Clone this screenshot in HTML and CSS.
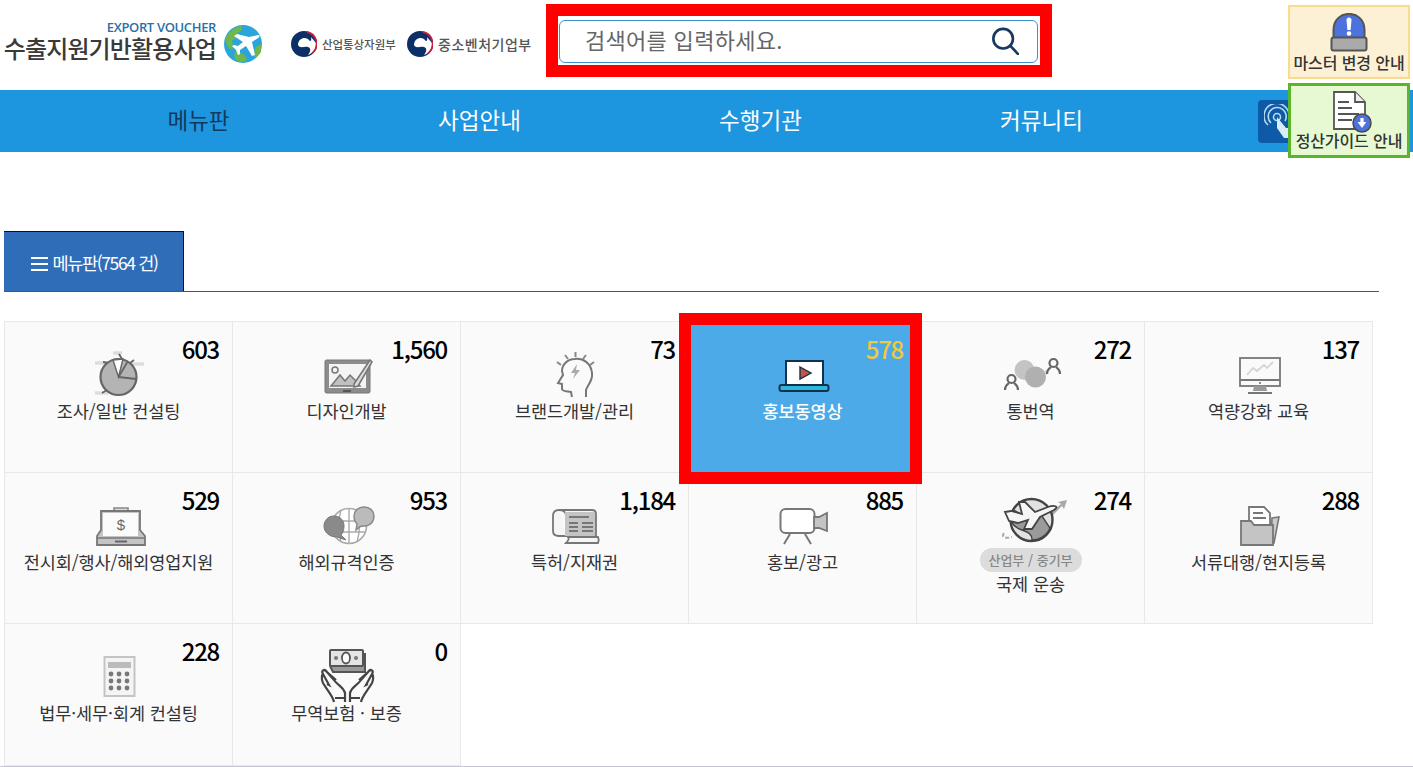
FILE: index.html
```html
<!DOCTYPE html>
<html lang="ko">
<head>
    <meta charset="UTF-8">
    <meta name="viewport" content="width=device-width, initial-scale=1.0">
    <title>수출지원기반활용사업</title>
    <link rel="stylesheet" href="styles.css">
</head>
<body>
    <header class="top">
        <div class="logo">
            <div class="logo-text">
                <span class="logo-en">EXPORT VOUCHER</span>
                <span class="logo-ko">수출지원기반활용사업</span>
            </div>
            <svg class="globe" width="38" height="38" viewBox="0 0 38 38">
                <circle cx="19" cy="19" r="19" fill="#2aa5dc"/>
                <path d="M2 13 C5 6 11 2 17 1 C20 4 16 7 13 8 C14 12 12 15 8 15 C8 19 10 22 8 25 C4 23 1 18 2 13 Z" fill="#6fb74a"/>
                <path d="M12 27 C17 27 22 30 23 35 C19 38 14 37 11 34 C10 31 10 29 12 27 Z" fill="#6fb74a"/>
                <path d="M32 22 L37 19 L37 27 C35 30 33 32 31 33 C30 29 30 25 32 22 Z" fill="#6fb74a"/>
                <path d="M34 10 C36 10 36 12 34 13 L28 17 L31 30 L28 31 L22 21 L16 25 L16 29 L14 30 L12 25 L8 21 L10 20 L14 21 L19 17 L10 11 L13 9 L25 12 Z" fill="#fff"/>
            </svg>
        </div>
        <div class="gov gov-first">
            <svg width="26" height="26" viewBox="0 0 26 26">
                <circle cx="13" cy="13" r="13" fill="#0c2f66"/>
                <path d="M7 14 C7 7 15 5 18 9 C19 11 21 10 20 6 L25 12 C25 18 22 22 17 24 C20 20 20 17 17 16 C13 15 9 18 7 14 Z" fill="#fff"/>
                <path d="M16 1 A12.200 12.200 0 0 1 21 22.500" fill="none" stroke="#c8203c" stroke-width="1.800"/>
            </svg>
            <span class="gov-name">산업통상자원부</span>
        </div>
        <div class="gov">
            <svg width="26" height="26" viewBox="0 0 26 26">
                <circle cx="13" cy="13" r="13" fill="#0c2f66"/>
                <path d="M7 14 C7 7 15 5 18 9 C19 11 21 10 20 6 L25 12 C25 18 22 22 17 24 C20 20 20 17 17 16 C13 15 9 18 7 14 Z" fill="#fff"/>
                <path d="M16 1 A12.200 12.200 0 0 1 21 22.500" fill="none" stroke="#c8203c" stroke-width="1.800"/>
            </svg>
            <span class="gov-name gov-name-big">중소벤처기업부</span>
        </div>
        <div class="search-mark">
            <div class="search">
                <span class="search-hint">검색어를 입력하세요.</span>
                <svg class="search-ico" width="28" height="28" viewBox="0 0 30 30">
                    <circle cx="13" cy="12.500" r="10.500" fill="none" stroke="#17395f" stroke-width="2.800"/>
                    <path d="M20.500 20 L29 29" stroke="#17395f" stroke-width="2.800" stroke-linecap="round"/>
                </svg>
            </div>
        </div>
    </header>

    <nav class="nav">
        <a class="nav-item active">메뉴판</a>
        <a class="nav-item">사업안내</a>
        <a class="nav-item">수행기관</a>
        <a class="nav-item">커뮤니티</a>
        <span class="touch">
            <svg width="30" height="34" viewBox="0 0 30 34" fill="none" stroke="#b9dcf5" stroke-width="1.600">
                <circle cx="13" cy="13" r="3.500"/>
                <path d="M7 19 A9 9 0 1 1 21 17"/>
                <path d="M4 21 A12.500 12.500 0 1 1 25 13"/>
                <path d="M13 13 L22 24 L30 24 L30 34 L20 34 L13 24" fill="#d8ecfa" stroke="none"/>
            </svg>
        </span>
    </nav>

    <div class="side">
        <a class="side-btn side-master">
            <svg width="38" height="39" viewBox="0 0 38 39">
                <path d="M3.500 26 L3.500 17 C3.500 -4.500 34.500 -4.500 34.500 17 L34.500 26 Z" fill="#4b72dd" stroke="#555" stroke-width="2"/>
                <rect x="1.500" y="24.500" width="35" height="13" rx="2" fill="#aaa" stroke="#555" stroke-width="2"/>
                <path d="M16.500 7 C16.500 3.500 21.500 3.500 21.500 7 L20.600 17 L17.400 17 Z" fill="#fff"/>
                <circle cx="19" cy="20.500" r="2.300" fill="#fff"/>
            </svg>
            <span>마스터 변경 안내</span>
        </a>
        <a class="side-btn side-guide">
            <svg width="40" height="42" viewBox="0 0 40 42">
                <path d="M2 1 L23 1 L33 11 L33 38 L2 38 Z" fill="#fff" stroke="#555" stroke-width="1.800"/>
                <path d="M23 1 L23 11 L33 11" fill="#eee" stroke="#555" stroke-width="1.800"/>
                <path d="M6 11 L17 11 M6 17 L20 17 M6 23 L27 23 M6 29 L20 29" stroke="#555" stroke-width="1.800"/>
                <circle cx="30" cy="32" r="9" fill="#4b72dd" stroke="#4a4a4a" stroke-width="1.500"/>
                <path d="M28.400 27 L31.600 27 L31.600 31 L34.400 31 L30 37 L25.600 31 L28.400 31 Z" fill="#fff"/>
            </svg>
            <span>정산가이드 안내</span>
        </a>
    </div>

    <main>
        <div class="tabs">
            <a class="tab"><span class="burger"></span>메뉴판(7564 건)</a>
        </div>

        <div class="board">
            <a class="cell">
                <b class="count">603</b>
                <svg class="ico" width="66" height="46" viewBox="0 0 66 46">
                    <path d="M9 12 L23 12 M43 13 L58 13 M9 42 L22 42 M27 2 L36 2" stroke="#ddd" stroke-width="3.500"/>
                    <circle cx="32.500" cy="26" r="18" fill="#b4b4b4" stroke="#666" stroke-width="2.200"/>
                    <path d="M32.500 26 L27 9 L37 8 Z" fill="#fff" stroke="#666" stroke-width="1.400"/>
                    <path d="M32.500 26 L42 10 M32.500 26 L50 28 M22 12 L17 11 M36 8 L33 3 M44 12 L48 9 M21 39 L16 42" fill="none" stroke="#666" stroke-width="1.800"/>
                </svg>
                <span class="name">조사/일반 컨설팅</span>
            </a>
            <a class="cell">
                <b class="count">1,560</b>
                <svg class="ico" width="66" height="46" viewBox="0 0 66 46">
                    <rect x="11" y="9" width="45" height="33" rx="1.500" fill="#8c8c8c" stroke="#777"/>
                    <rect x="15" y="13" width="37" height="24" fill="#f4f4f4"/>
                    <circle cx="21" cy="19" r="3" fill="#f4f4f4" stroke="#777" stroke-width="1.500"/>
                    <path d="M17 35 L26 24 L31 30 L36 24 L43 31 L46 35 Z" fill="#c0c0c0" stroke="#777" stroke-width="1.500"/>
                    <path d="M40 33 L56 9 L58 11 L44 35 L40 36 Z" fill="#ddd" stroke="#777" stroke-width="1.600"/>
                    <rect x="29" y="39" width="8" height="2" fill="#555"/>
                </svg>
                <span class="name">디자인개발</span>
            </a>
            <a class="cell">
                <b class="count">73</b>
                <svg class="ico" width="66" height="46" viewBox="0 0 66 46">
                    <path d="M44 46 L44 39 C46 33 51 30 50 22 C49 12 41 7 33 8 C25 8 20 14 20 20 L21 24 L16 32 L20 33 L20 38 C21 41 26 40 29 41 L30 46" fill="none" stroke="#777" stroke-width="2"/>
                    <path d="M33.500 1 L33.500 6 M23 4 L26 8 M44 4 L41 8 M15 11 L19 14 M52 11 L48 14" stroke="#888" stroke-width="2"/>
                    <path d="M35 13 L29 22 L33 22 L31 28 L38 19 L34 19 Z" fill="#aaa"/>
                </svg>
                <span class="name">브랜드개발/관리</span>
            </a>
            <a class="cell picked">
                <b class="count">578</b>
                <svg class="ico" width="66" height="46" viewBox="0 0 66 46">
                    <rect x="16" y="10" width="37" height="24" fill="#fff" stroke="#12324a" stroke-width="2"/>
                    <path d="M30 16 L41 22 L30 28 Z" fill="#c9533c" stroke="#12324a" stroke-width="1.400"/>
                    <rect x="9.500" y="34" width="49" height="6" rx="2" fill="#2bb7e0" stroke="#12324a" stroke-width="2"/>
                </svg>
                <span class="name">홍보동영상</span>
            </a>
            <a class="cell">
                <b class="count">272</b>
                <svg class="ico" width="66" height="46" viewBox="0 0 66 46">
                    <circle cx="26.500" cy="19" r="10" fill="#c4c4c4"/>
                    <circle cx="37.500" cy="26" r="10.500" fill="#b0b0b0"/>
                    <path d="M46 20 L51 18 L48 25 Z" fill="#d6d6d6"/>
                    <g fill="none" stroke="#666" stroke-width="2.200">
                        <circle cx="13.500" cy="28" r="4"/>
                        <path d="M7 39 C7 34 10 33 11 32 M20 39 C20 34 17 33 16 32"/>
                        <circle cx="55.500" cy="12" r="4"/>
                        <path d="M49 23 C49 18 52 17 53 16 M62 23 C62 18 59 17 58 16"/>
                    </g>
                </svg>
                <span class="name">통번역</span>
            </a>
            <a class="cell">
                <b class="count">137</b>
                <svg class="ico" width="66" height="46" viewBox="0 0 66 46">
                    <rect x="14" y="7" width="40" height="28" fill="#fafafa" stroke="#777" stroke-width="1.800"/>
                    <path d="M14 29 L54 29" stroke="#777" stroke-width="1.800"/>
                    <path d="M28 35 L40 35 L41 40 L27 40 Z" fill="#999"/>
                    <path d="M22 42 L46 42" stroke="#777" stroke-width="2"/>
                    <path d="M21 24 L27 17 L31 20 L38 14 L41 17 L47 11" fill="none" stroke="#d4d4d4" stroke-width="1.800"/>
                    <circle cx="34" cy="32" r="1" fill="#666"/>
                </svg>
                <span class="name">역량강화 교육</span>
            </a>

            <a class="cell">
                <b class="count">529</b>
                <svg class="ico" width="66" height="46" viewBox="0 0 66 46">
                    <path d="M28 9 L28 6 L42 6 L42 9" fill="#ddd" stroke="#888" stroke-width="1.600"/>
                    <path d="M15 9 L54 9 L54 28 L59 34 L59 43 L11 43 L11 34 L15 28 Z" fill="#c4c4c4" stroke="#777" stroke-width="1.800"/>
                    <rect x="17" y="11" width="35" height="23" fill="#fbfbfb"/>
                    <path d="M11 36 L59 36" stroke="#777" stroke-width="1.400"/>
                    <path d="M29 39.500 L41 39.500" stroke="#666" stroke-width="2"/>
                    <text x="35" y="28" text-anchor="middle" class="ico-dollar">$</text>
                </svg>
                <span class="name">전시회/행사/해외영업지원</span>
            </a>
            <a class="cell">
                <b class="count">953</b>
                <svg class="ico" width="66" height="46" viewBox="0 0 66 46">
                    <circle cx="35" cy="24" r="17.500" fill="#fff" stroke="#aaa" stroke-width="1.600"/>
                    <path d="M35 7 L35 41 M27 8 C24 18 24 30 27 40 M43 8 C46 18 46 30 43 40 M18 19 L52 19 M18 30 L52 30" fill="none" stroke="#aaa" stroke-width="1.400"/>
                    <path d="M19.500 14 C27 14 30 19 30 24 C30 29 28 32 27 33 L32 38 L23 35 C15 35 10 30 10 24 C10 19 14 14 19.500 14 Z" fill="#8a8a8a" stroke="#777"/>
                    <path d="M50 5 C56 5 60 9 60 14 C60 20 56 24 50 24 C47 24 46 24 42 28 L43 22 C41 20 40 17 40 14 C40 9 44 5 50 5 Z" fill="#bbb" stroke="#888" stroke-width="1.400"/>
                </svg>
                <span class="name">해외규격인증</span>
            </a>
            <a class="cell">
                <b class="count">1,184</b>
                <svg class="ico" width="66" height="46" viewBox="0 0 66 46">
                    <path d="M17 8 L50 8 C53 8 54 10 54 12 L54 34 L24 34 L24 14 C24 10 21 8 17 8 C13 8 11 10 11 14 L11 29 C11 32 13 34 17 34 L24 34" fill="#f5f5f5" stroke="#777" stroke-width="1.800"/>
                    <path d="M23 10 L53 10 L53 34 L23 34 Z" fill="#c4c4c4"/>
                    <path d="M27 15 L47 15 M27 21 L36 21 M40 21 L51 21 M27 25 L36 25 M40 25 L51 25 M27 29 L36 29 M40 29 L51 29" stroke="#777" stroke-width="1.800"/>
                    <path d="M24 41 C27 38 27 36 26 35 L56 35 C57 37 57 39 56 41 Z" fill="#f5f5f5" stroke="#777" stroke-width="1.800"/>
                </svg>
                <span class="name">특허/지재권</span>
            </a>
            <a class="cell">
                <b class="count">885</b>
                <svg class="ico" width="66" height="46" viewBox="0 0 66 46">
                    <rect x="10.500" y="7" width="34" height="24" rx="5" fill="#fff" stroke="#777" stroke-width="2"/>
                    <path d="M44 15 L49 15 L57 11 L57 29 L49 26 L44 26 Z" fill="#c4c4c4" stroke="#777" stroke-width="1.800"/>
                    <path d="M20 32 L14 42 M35 32 L41 42" stroke="#777" stroke-width="2"/>
                </svg>
                <span class="name">홍보/광고</span>
            </a>
            <a class="cell">
                <b class="count">274</b>
                <svg class="ico" width="66" height="46" viewBox="0 0 66 46">
                    <path d="M6 31 C3 35 7 37 14 35" fill="none" stroke="#aaa" stroke-width="2" stroke-dasharray="4 2"/>
                    <path d="M52 11 L63 2 L60 0 L69 -2 L66 7 L64 4 L54 14 Z" fill="#a8a8a8"/>
                    <circle cx="33.500" cy="18" r="21" fill="#e2e2e2" stroke="#444" stroke-width="2.400"/>
                    <path d="M15 8 L32 16 L44 14 L52 26 C48 35 40 38 34 38 C34 32 30 30 24 28 C18 26 14 22 13 18 Z" fill="#9a9a9a" stroke="#444" stroke-width="1.400"/>
                    <path d="M7 10 L13 9 L24 12 L21 0 L27 0 L37 10 L50 5 C56 3 62 4 56 8 L42 15 L34 27 L26 27 L30 18 L20 21 L11 19 Z" fill="#f6f6f6" stroke="#444" stroke-width="1.800"/>
                </svg>
                <span class="pill">산업부 / 중기부</span>
                <span class="name">국제 운송</span>
            </a>
            <a class="cell">
                <b class="count">288</b>
                <svg class="ico" width="66" height="46" viewBox="0 0 66 46">
                    <path d="M23 17 L23 5 L38 5 L44 11 L44 26 L23 26 Z" fill="#fff" stroke="#777" stroke-width="1.800"/>
                    <path d="M27 11 L37 11 M27 16 L40 16" stroke="#777" stroke-width="1.800"/>
                    <path d="M46 16 L53 15 L48 41 L45 41 Z" fill="#ccc" stroke="#777" stroke-width="1.600"/>
                    <path d="M15 19 L25 19 L28 23 L47 23 L47 43 L15 43 Z" fill="#c4c4c4" stroke="#777" stroke-width="1.800"/>
                </svg>
                <span class="name">서류대행/현지등록</span>
            </a>

            <a class="cell">
                <b class="count">228</b>
                <svg class="ico" width="66" height="46" viewBox="0 0 66 46">
                    <rect x="18.500" y="4" width="30" height="39" fill="#f4f4f4" stroke="#c4c4c4" stroke-width="2"/>
                    <rect x="22" y="9" width="23" height="6" fill="#bbb"/>
                    <g fill="#777">
                        <circle cx="25" cy="21" r="2.400"/><circle cx="33" cy="21" r="2.400"/><circle cx="41" cy="21" r="2.400"/>
                        <circle cx="25" cy="28" r="2.400"/><circle cx="33" cy="28" r="2.400"/><circle cx="41" cy="28" r="2.400"/>
                        <circle cx="25" cy="35" r="2.400"/><circle cx="33" cy="35" r="2.400"/><circle cx="41" cy="35" r="2.400"/>
                    </g>
                </svg>
                <span class="name">법무·세무·회계 컨설팅</span>
            </a>
            <a class="cell">
                <b class="count">0</b>
                <svg class="ico" width="66" height="46" viewBox="0 0 66 46">
                    <path d="M16 13 L19 19 L51 19 L51 0" fill="#999" stroke="#555" stroke-width="2"/>
                    <rect x="16" y="-3" width="33" height="16" rx="1" fill="#e4e4e4" stroke="#555" stroke-width="2"/>
                    <ellipse cx="32" cy="5" rx="4" ry="5.500" fill="#fff" stroke="#555" stroke-width="1.800"/>
                    <circle cx="22" cy="5" r="2" fill="#777"/><circle cx="42" cy="5" r="2" fill="#777"/>
                    <path d="M31 49 L31 40 C29 33 24 33 20 27 L13 19 C10 15 7 18 9 21 L15 32 L13 31 M20 49 C19 43 13 37 9 30 C7 26 8 21 9 21 M22 27 L14 20 M31 45 L21 45" fill="none" stroke="#444" stroke-width="2.200"/>
                    <path d="M36 49 L36 40 C38 33 43 33 47 27 L54 19 C57 15 60 18 58 21 L52 32 L54 31 M47 49 C48 43 54 37 58 30 C60 26 59 21 58 21 M45 27 L53 20 M36 45 L46 45" fill="none" stroke="#444" stroke-width="2.200"/>
                </svg>
                <span class="name">무역보험 · 보증</span>
            </a>
        </div>
    </main>
    <footer class="foot"></footer>
</body>
</html>
```

FILE: styles.css
```css
*, *::after {
    box-sizing: border-box;
}
html, body {
    height: 767px;
    overflow: hidden;
}
body {
    margin: 0;
    position: relative;
    background: #fff;
    color: #333;
    font-family: "Noto Sans CJK KR", "Noto Sans", sans-serif;
}

/* header */
.top {
    display: flex;
    align-items: flex-start;
    height: 90px;
    padding-left: 4px;
}
.logo {
    display: flex;
    flex: none;
    align-items: center;
    width: 258px;
    margin-top: 19px;
}
.logo-text {
    display: flex;
    flex-direction: column;
    align-items: flex-end;
    width: 212px;
}
.logo-en {
    font-family: "Open Sans", sans-serif;
    font-size: 13px;
    font-weight: 600;
    line-height: 14px;
    letter-spacing: -0.35px;
    color: #2a6fa9;
}
.logo-ko {
    font-size: 24px;
    font-weight: 500;
    line-height: 28px;
    letter-spacing: -0.85px;
    white-space: nowrap;
    color: #3a3a3a;
}
.globe {
    margin-left: 8px;
    margin-top: 6px;
}
.gov {
    display: flex;
    flex: none;
    align-items: center;
    width: 125px;
    margin-top: 31px;
    margin-left: 10px;
}
.gov-first {
    width: 106px;
    margin-left: 29px;
}
.gov-name {
    margin-left: 5px;
    font-size: 11.5px;
    font-weight: 500;
    letter-spacing: -0.05px;
    color: #555;
    white-space: nowrap;
}
.gov-name-big {
    margin-left: 5px;
    font-size: 14px;
    letter-spacing: 0.5px;
}
.search-mark {
    flex: none;
    width: 506px;
    height: 73px;
    margin-top: 4px;
    margin-left: 14px;
    padding: 4px 1px 2px;
    border: 12px solid #f00;
    background: #fff;
}
.search {
    display: flex;
    align-items: center;
    justify-content: space-between;
    height: 43px;
    width: 479px;
    padding: 0 18px 0 25px;
    border: 1px solid #3d93c9;
    border-radius: 6px;
}
.search-hint {
    padding-bottom: 6px;
    font-size: 22px;
    letter-spacing: 0.3px;
    color: #666;
}
.search-ico {
    margin-bottom: 2px;
}

/* nav */
.nav {
    display: flex;
    align-items: center;
    height: 62px;
    padding-left: 58px;
    background: #1e95df;
}
.nav-item {
    width: 281px;
    padding-bottom: 4px;
    text-align: center;
    font-size: 22.5px;
    color: #fff;
}
.nav-item.active {
    color: #123a5c;
}
.touch {
    display: flex;
    align-items: center;
    width: 50px;
    height: 43px;
    margin-left: 76px;
    padding-left: 6px;
    border-radius: 4px;
    background: #0e5aa6;
}

/* floating guide buttons */
.side {
    position: absolute;
    top: 5px;
    left: 1288px;
    display: flex;
    flex-direction: column;
    gap: 4px;
    width: 122px;
}
.side-btn {
    display: flex;
    flex-direction: column;
    align-items: center;
    font-size: 16px;
    font-weight: 500;
    line-height: 20px;
    letter-spacing: -0.1px;
    white-space: nowrap;
    color: #333;
}
.side-master {
    height: 74px;
    padding-top: 6px;
    border: 2px solid #f6dc8c;
    background: #fdf1d5;
}
.side-guide {
    height: 75px;
    padding-top: 5px;
    border: 3px solid #5ab52c;
    background: #e6f9d3;
}
.side-btn svg {
    flex: none;
}
.side-guide svg {
    margin-left: 6px;
    margin-bottom: -3px;
}

/* tab */
.tabs {
    display: flex;
    width: 1375px;
    height: 61px;
    margin: 79px 0 0 4px;
    border-bottom: 1px solid #555;
}
.tab {
    display: flex;
    align-items: center;
    justify-content: center;
    width: 180px;
    height: 60px;
    padding-top: 1px;
    padding-left: 2px;
    border-top: 1px solid #111;
    border-right: 1px solid #111;
    background: #2f6db8;
    font-size: 17.5px;
    letter-spacing: -1.35px;
    color: #fff;
}
.burger {
    width: 17px;
    height: 14px;
    margin-top: 3px;
    margin-right: 4px;
    border-top: 2px solid #fff;
    border-bottom: 2px solid #fff;
    background: linear-gradient(#fff, #fff) center / 100% 2px no-repeat;
}

/* board */
.board {
    display: grid;
    grid-template-columns: repeat(6, 228px);
    grid-template-rows: 151px 151px 142px;
    width: 1369px;
    margin: 29px 0 0 4px;
    border-top: 1px solid #e8e8e8;
    border-left: 1px solid #e8e8e8;
}
.cell {
    position: relative;
    display: flex;
    flex-direction: column;
    align-items: center;
    padding-top: 29px;
    border-right: 1px solid #e8e8e8;
    border-bottom: 1px solid #e8e8e8;
    background: #fafafa;
}
.count {
    position: absolute;
    top: 12px;
    right: 13px;
    font-size: 24px;
    font-weight: 500;
    line-height: 30px;
    letter-spacing: -1.25px;
    color: #000;
}
.ico {
    display: block;
    flex: none;
    overflow: visible;
}
.ico-dollar {
    font-family: "Liberation Sans", sans-serif;
    font-size: 15px;
    fill: #666;
}
.name {
    margin-top: 2px;
    font-size: 17.5px;
    line-height: 24px;
    letter-spacing: -0.1px;
    white-space: nowrap;
    color: #333;
}
.pill {
    width: 102px;
    height: 24px;
    margin-bottom: -2px;
    border-radius: 12px;
    background: #dcdcdc;
    text-align: center;
    font-size: 13px;
    font-weight: 500;
    line-height: 24px;
    color: #888;
}
.picked {
    z-index: 1;
    background: #4daae8;
}
.picked::after {
    content: "";
    position: absolute;
    top: -9px;
    left: -10px;
    width: 243px;
    height: 171px;
    border: 12px solid #f00;
    pointer-events: none;
}
.picked .count {
    color: #efc93d;
}
.picked .name {
    font-weight: 500;
    color: #fff;
}
.foot {
    height: 1px;
    background: #c6c6d8;
}
```
